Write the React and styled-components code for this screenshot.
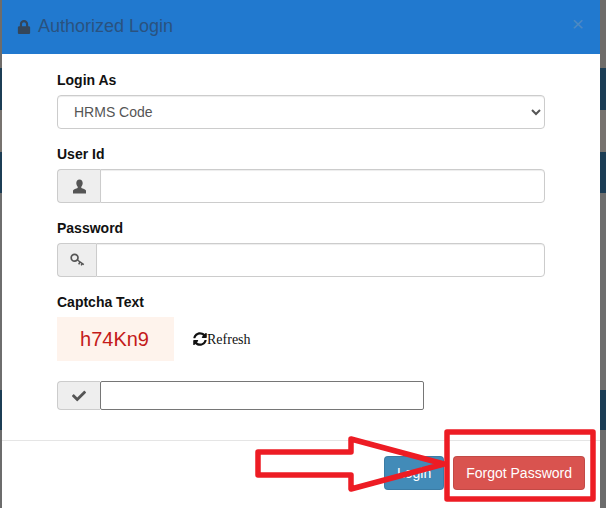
import React from "react";
import styled, { createGlobalStyle } from "styled-components";
import { FaLock, FaCheck, FaSyncAlt } from "react-icons/fa";

const GlobalStyle = createGlobalStyle`
  html, body {
    margin: 0;
    padding: 0;
    height: 508px;
    overflow: hidden;
    background: #6e6e6e;
    font-family: "Liberation Sans", Arial, sans-serif;
  }
`;

const bands = [
  { height: 68, color: "#6f6c69" },
  { height: 42, color: "#1c3d55" },
  { height: 42, color: "#77736f" },
  { height: 41, color: "#1c3d55" },
  { height: 197, color: "#6e6e6e" },
  { height: 40, color: "#1c3d55" },
  { height: 78, color: "#6c6c6c" },
];

export default function App() {
  return (
    <>
      <GlobalStyle />
      <Page>
        <Backdrop>
          {bands.map((band, i) => (
            <Band key={i} $height={band.height} $color={band.color} />
          ))}
        </Backdrop>
        <Modal>
          <Header>
            <Title>
              <FaLock size={14} color="#34465a" />
              Authorized Login
            </Title>
            <Close>×</Close>
          </Header>
          <Body>
            <Group>
              <Label>Login As</Label>
              <Select defaultValue="hrms">
                <option value="hrms">HRMS Code</option>
              </Select>
            </Group>
            <Group>
              <Label>User Id</Label>
              <InputGroup>
                <Addon $width={43}>
                  <svg width="15" height="15" viewBox="0 0 15 15" fill="#555">
                    <path d="M7.5 0.5c2 0 3.2 1.5 3.2 3.6 0 1.5-.6 2.9-1.4 3.7v1.2c1.6.7 4.2 1.3 4.7 2.6v3H1v-3c.5-1.3 3.1-1.9 4.7-2.6V7.8C4.9 7 4.3 5.6 4.3 4.1c0-2.1 1.2-3.6 3.2-3.6z" />
                  </svg>
                </Addon>
                <Input />
              </InputGroup>
            </Group>
            <Group>
              <Label>Password</Label>
              <InputGroup>
                <Addon $width={39}>
                  <svg width="15" height="14" viewBox="0 0 15 14" fill="none" stroke="#555">
                    <circle cx="4.6" cy="4.8" r="3.4" strokeWidth="1.7" />
                    <path d="M7.4 7l6.4 4.6M10 8.9l-1.3 2.4M12.2 10.5l-1 1.9" strokeWidth="1.5" />
                  </svg>
                </Addon>
                <Input />
              </InputGroup>
            </Group>
            <CaptchaGroup>
              <Label>Captcha Text</Label>
              <CaptchaRow>
                <Captcha>h74Kn9</Captcha>
                <Refresh>
                  <FaSyncAlt size={14} color="#111" />
                  <RefreshText>Refresh</RefreshText>
                </Refresh>
              </CaptchaRow>
            </CaptchaGroup>
            <CaptchaInputGroup>
              <Addon $width={43}>
                <FaCheck size={14} color="#555" />
              </Addon>
              <CaptchaInput />
            </CaptchaInputGroup>
          </Body>
          <Footer>
            <Button $color="#428bb8">Login</Button>
            <Button $color="#d9534f">Forgot Password</Button>
          </Footer>
        </Modal>
        <Annotation viewBox="0 0 606 508">
          <rect x="447" y="432" width="146" height="67" />
          <polygon points="258,452 351,452 351,439 444,464 351,489 351,475 258,475" />
        </Annotation>
      </Page>
    </>
  );
}

const Page = styled.div`
  position: relative;
  width: 606px;
  height: 508px;
  overflow: hidden;
`;

const Backdrop = styled.div`
  position: absolute;
  inset: 0;
  display: flex;
  flex-direction: column;
`;

const Band = styled.div`
  height: ${(p) => p.$height}px;
  background: ${(p) => p.$color};
`;

const Modal = styled.div`
  position: relative;
  width: 598px;
  height: 508px;
  margin-left: 2px;
  background: #fff;
`;

const Header = styled.div`
  height: 54px;
  padding: 0 16px 0 15px;
  box-sizing: border-box;
  display: flex;
  align-items: center;
  justify-content: space-between;
  background: #2179cf;
`;

const Title = styled.div`
  display: flex;
  align-items: center;
  gap: 7px;
  font-size: 18px;
  margin-top: -1px;
  color: #2a527f;
`;

const Close = styled.span`
  font-size: 21px;
  line-height: 1;
  margin-top: -8px;
  color: #4d89c2;
`;

const Body = styled.div`
  width: 488px;
  margin-left: 55px;
  padding-top: 16px;
  height: 386px;
  box-sizing: border-box;
`;

const Group = styled.div`
  margin-bottom: 15px;
`;

const CaptchaGroup = styled(Group)`
  margin-bottom: 20px;
`;

const Label = styled.div`
  height: 20px;
  line-height: 20px;
  margin-bottom: 5px;
  font-size: 14px;
  font-weight: bold;
  color: #111;
`;

const Select = styled.select`
  display: block;
  width: 100%;
  height: 34px;
  padding: 6px 12px;
  box-sizing: border-box;
  font-family: inherit;
  font-size: 14px;
  color: #555;
  background: #fff;
  border: 1px solid #ccc;
  border-radius: 4px;
  box-shadow: inset 0 1px 1px rgba(0, 0, 0, 0.075);
`;

const InputGroup = styled.div`
  display: flex;
  height: 34px;
`;

const Addon = styled.div`
  flex: none;
  width: ${(p) => p.$width}px;
  box-sizing: border-box;
  display: flex;
  align-items: center;
  justify-content: center;
  background: #eee;
  border: 1px solid #ccc;
  border-right: 0;
  border-radius: 4px 0 0 4px;
`;

const Input = styled.input`
  flex: 1;
  min-width: 0;
  box-sizing: border-box;
  border: 1px solid #ccc;
  border-radius: 0 4px 4px 0;
  background: #fff;
  box-shadow: inset 0 1px 1px rgba(0, 0, 0, 0.075);
`;

const CaptchaRow = styled.div`
  display: flex;
  align-items: center;
  gap: 19px;
`;

const Captcha = styled.div`
  width: 117px;
  height: 44px;
  padding-right: 2px;
  box-sizing: border-box;
  display: flex;
  align-items: center;
  justify-content: center;
  background: #fef3ec;
  color: #c41a1a;
  font-size: 20px;
`;

const Refresh = styled.div`
  display: flex;
  align-items: center;
  font-family: "Liberation Serif", "Times New Roman", serif;
  font-size: 14px;
  color: #111;
`;

const RefreshText = styled.span`
  margin-top: 2px;
`;

const CaptchaInputGroup = styled.div`
  display: flex;
  width: 367px;
  height: 29px;
`;

const CaptchaInput = styled.input`
  flex: 1;
  min-width: 0;
  box-sizing: border-box;
  border: 1px solid #767676;
  border-radius: 2px;
  background: #fff;
`;

const Footer = styled.div`
  display: flex;
  justify-content: flex-end;
  gap: 9px;
  padding: 15px;
  border-top: 1px solid #e5e5e5;
`;

const Button = styled.button`
  height: 34px;
  padding: 0 12px;
  font-family: inherit;
  font-size: 14px;
  color: #fff;
  background: ${(p) => p.$color};
  border: 1px solid rgba(0, 0, 0, 0.1);
  border-radius: 4px;
`;

const Annotation = styled.svg`
  position: absolute;
  inset: 0;
  width: 606px;
  height: 508px;
  pointer-events: none;
  fill: none;
  stroke: #ed1c24;
  stroke-width: 5.5;
  stroke-linejoin: round;
`;
